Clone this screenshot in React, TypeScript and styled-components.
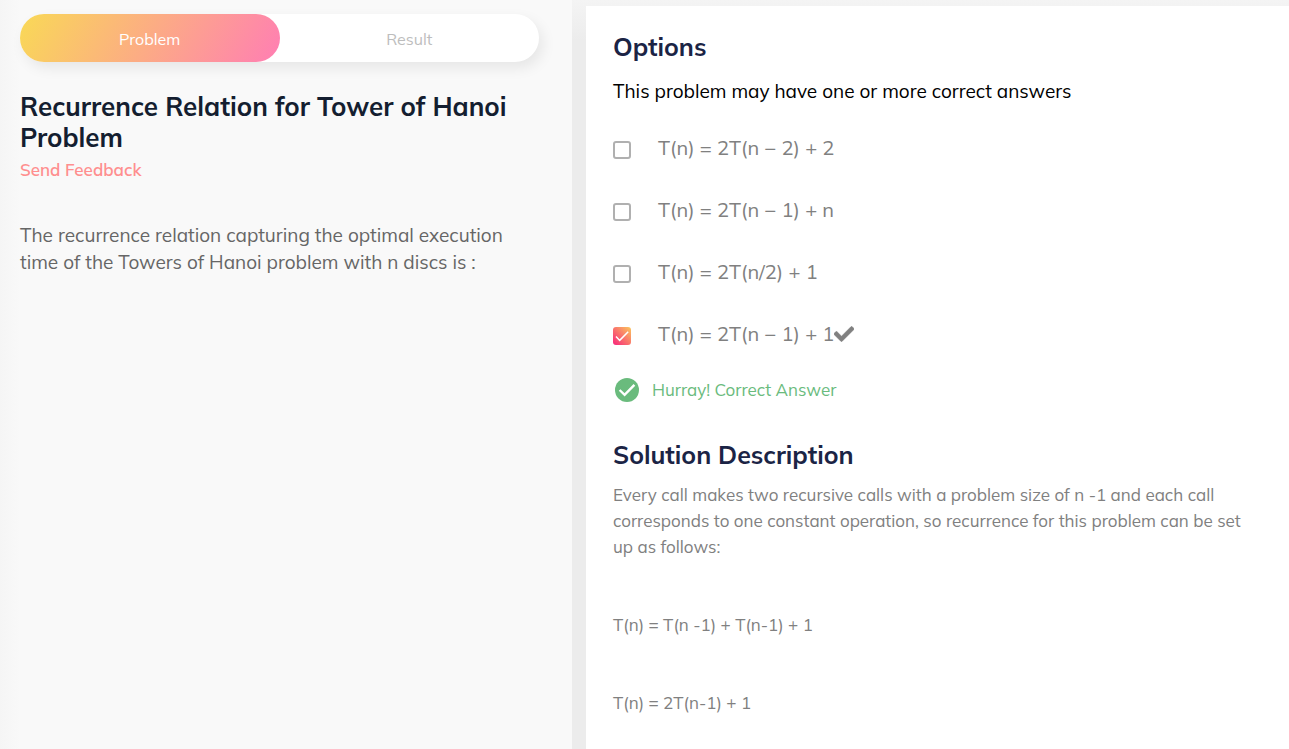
import React, { useState } from "react";
import styled, { createGlobalStyle } from "styled-components";

const GlobalStyle = createGlobalStyle`
  *, *::before, *::after { box-sizing: border-box; }
  body {
    margin: 0;
    background: #f3f3f3;
    font-family: Mulish, Muli, "Open Sans", "Noto Sans", sans-serif;
  }
  h1, h2, p { margin: 0; }
`;

const Page = styled.div`
  display: grid;
  grid-template-columns: minmax(0, 572fr) minmax(0, 703fr);
  column-gap: 14px;
  min-height: 100vh;
  background: linear-gradient(#f4f4f4, #ececec 40px);
`;

const ProblemPanel = styled.section`
  padding: 14px 33px 24px 20px;
  background: linear-gradient(90deg, #f5f5f5, #f9f9f9 20px);
`;

const AnswerPanel = styled.section`
  margin-top: 6px;
  padding: 25px 32px 24px 27px;
  background: #fff;
`;

const Tabs = styled.div`
  display: flex;
  height: 48px;
  border-radius: 24px;
  background: #fff;
  box-shadow: 4px 6px 14px rgba(0, 0, 0, 0.08);
`;

const Tab = styled.button<{ $active: boolean }>`
  flex: 1;
  border: 0;
  padding: 2px 0 0;
  border-radius: 24px;
  font: inherit;
  font-size: 16px;
  cursor: pointer;
  color: ${(p) => (p.$active ? "#fff" : "#bdbdbd")};
  background: ${(p) => (p.$active ? "linear-gradient(119deg, #f9d956 0%, #ff7eb3 100%)" : "transparent")};
`;

const Title = styled.h1`
  margin-top: 29px;
  font-size: 26px;
  line-height: 31px;
  font-weight: 700;
  color: #141e30;
`;

const FeedbackLink = styled.a`
  display: inline-block;
  margin-top: 5px;
  font-size: 17px;
  line-height: 24px;
  font-weight: 600;
  color: #ff8f8f;
  text-decoration: none;
`;

const Statement = styled.p`
  margin-top: 40px;
  font-size: 19px;
  line-height: 27px;
  color: #666;
`;

const Heading = styled.h2`
  font-size: 25px;
  line-height: 32px;
  font-weight: 700;
  color: #1b2445;
`;

const Hint = styled.p`
  margin-top: 15px;
  font-size: 19px;
  line-height: 26px;
  color: #000;
`;

const OptionList = styled.div`
  display: flex;
  flex-direction: column;
  gap: 34px;
  margin-top: 30px;
`;

const Option = styled.label`
  display: flex;
  align-items: center;
  height: 28px;
  font-size: 20px;
  line-height: 28px;
  color: #808080;
  cursor: pointer;
`;

const Box = styled.span`
  display: grid;
  width: 18px;
  height: 18px;
  margin: 3px 27px 0 0;

  > * { grid-area: 1 / 1; }
  > svg { width: 18px; height: 18px; pointer-events: none; }
`;

const Checkbox = styled.input`
  appearance: none;
  width: 18px;
  height: 18px;
  margin: 0;
  border: 2px solid #b0b0b0;
  border-radius: 3px;
  background: #fff;

  &:checked {
    border: 0;
    background: linear-gradient(45deg, #f8247c, #fbc75c);
  }
`;

const Tick = styled.svg`
  width: 20px;
  height: 20px;
`;

const Verdict = styled.p`
  display: flex;
  align-items: center;
  gap: 12px;
  margin-top: 28px;
  padding-left: 2px;
  font-size: 17px;
  line-height: 28px;
  color: #6abb7d;

  > svg { width: 25px; height: 25px; }
`;

const Solution = styled.section`
  margin-top: 35px;
`;

const Explanation = styled.div`
  display: grid;
  row-gap: 52px;
  margin-top: 11px;
  font-size: 17px;
  line-height: 26px;
  color: #808080;
`;

const options = [
  "T(n) = 2T(n − 2) + 2",
  "T(n) = 2T(n − 1) + n",
  "T(n) = 2T(n/2) + 1",
  "T(n) = 2T(n − 1) + 1",
];
const correct = 3;

export default function App() {
  const [tab, setTab] = useState("Problem");
  const [picked, setPicked] = useState<number[]>([correct]);

  const toggle = (i: number) =>
    setPicked((list) => (list.includes(i) ? list.filter((n) => n !== i) : [...list, i]));

  return (
    <>
      <GlobalStyle />
      <Page>
        <ProblemPanel>
          <Tabs role="tablist">
            {["Problem", "Result"].map((name) => (
              <Tab key={name} type="button" role="tab" aria-selected={tab === name} $active={tab === name} onClick={() => setTab(name)}>
                {name}
              </Tab>
            ))}
          </Tabs>
          <Title>Recurrence Relation for Tower of Hanoi Problem</Title>
          <FeedbackLink href="#feedback">Send Feedback</FeedbackLink>
          <Statement>
            The recurrence relation capturing the optimal execution time of the Towers of Hanoi problem with n discs is :
          </Statement>
        </ProblemPanel>

        <AnswerPanel>
          <Heading>Options</Heading>
          <Hint>This problem may have one or more correct answers</Hint>
          <OptionList>
            {options.map((text, i) => (
              <Option key={text}>
                <Box>
                  <Checkbox type="checkbox" checked={picked.includes(i)} onChange={() => toggle(i)} />
                  {picked.includes(i) && (
                    <svg viewBox="0 0 18 18" aria-hidden="true">
                      <path d="M3 9.5 6.7 13.4 15.2 4.8" fill="none" stroke="#fff" strokeWidth="1.5" />
                    </svg>
                  )}
                </Box>
                <span>{text}</span>
                {i === correct && (
                  <Tick viewBox="0 0 512 512" aria-hidden="true">
                    <path
                      fill="#808080"
                      stroke="#808080"
                      strokeWidth="16"
                      d="M173.898 439.404l-166.4-166.4c-9.997-9.997-9.997-26.206 0-36.204l36.203-36.204c9.997-9.998 26.207-9.998 36.204 0L192 312.69 432.095 72.596c9.997-9.997 26.207-9.997 36.204 0l36.203 36.204c9.997 9.997 9.997 26.206 0 36.204l-294.4 294.401c-9.998 9.997-26.207 9.997-36.204-.001z"
                    />
                  </Tick>
                )}
              </Option>
            ))}
          </OptionList>
          <Verdict>
            <svg viewBox="0 0 25 25" aria-hidden="true">
              <circle cx="12" cy="12" r="12" fill="#6abb7d" />
              <path d="M4.6 12 9.6 16.8 19.4 6.8" fill="none" stroke="#fff" strokeWidth="2.4" />
            </svg>
            Hurray! Correct Answer
          </Verdict>
          <Solution>
            <Heading>Solution Description</Heading>
            <Explanation>
              <p>
                Every call makes two recursive calls with a problem size of n -1 and each call corresponds to one constant
                operation, so recurrence for this problem can be set up as follows:
              </p>
              <p>T(n) = T(n -1) + T(n-1) + 1</p>
              <p>T(n) = 2T(n-1) + 1</p>
            </Explanation>
          </Solution>
        </AnswerPanel>
      </Page>
    </>
  );
}
